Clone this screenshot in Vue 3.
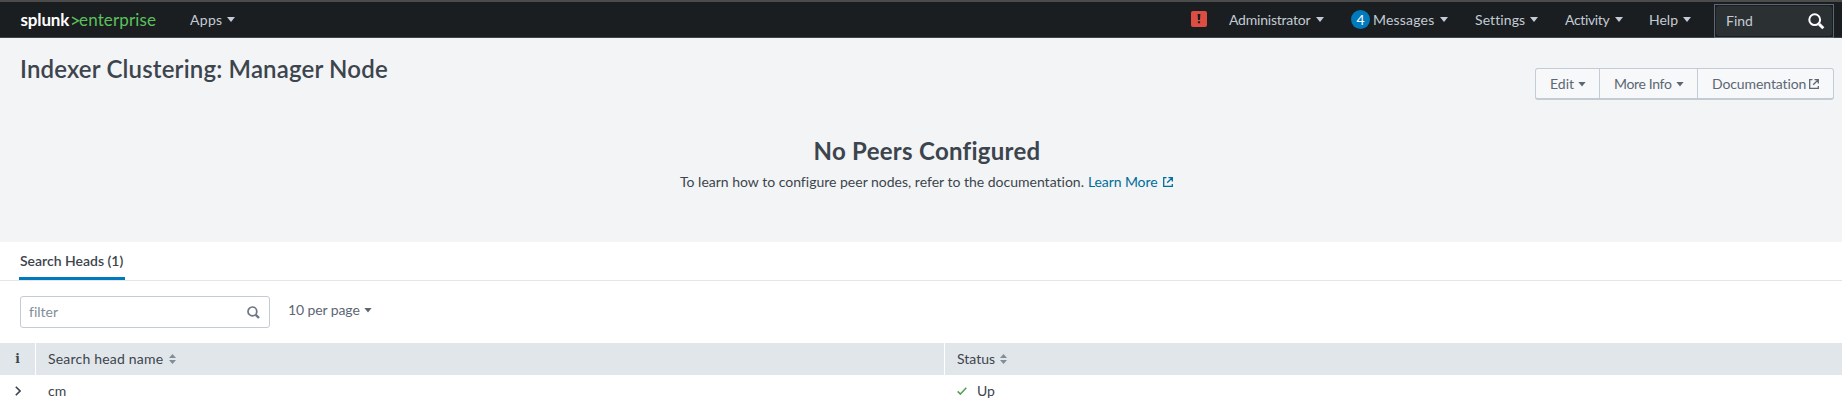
<script setup>
const menus = [
  { label: 'Administrator', cls: 'admin' },
  { label: 'Messages', cls: 'messages', count: 4 },
  { label: 'Settings', cls: 'settings' },
  { label: 'Activity', cls: 'activity' },
  { label: 'Help', cls: 'help' }
]
</script>

<template>
  <div class="page">
    <header class="bar">
      <div class="logo"><span class="brand">splunk</span><svg class="gt" width="9" height="10" viewBox="0 0 9 10"><path d="M1 1.2 7.4 4.8 1 8.4" /></svg><span class="edition">enterprise</span></div>
      <a class="menu apps"><span class="label">Apps</span><i class="caret"></i></a>
      <div class="alert"><svg width="16" height="16" viewBox="0 0 16 16"><path d="M6.6 3h2.8L9 9H7zM6.9 10.2h2.2v2H6.9z" /></svg></div>
      <a v-for="m in menus" :key="m.label" class="menu" :class="m.cls">
        <b v-if="m.count" class="count">{{ m.count }}</b>
        <span class="label">{{ m.label }}</span><i class="caret"></i>
      </a>
      <div class="find">
        <div class="find-in">
          <span>Find</span>
          <svg width="17" height="17" viewBox="0 0 17 17"><circle cx="6.7" cy="6.7" r="5.4" stroke-width="2" /><path d="m11 11 4.3 4.3" stroke-width="3" /></svg>
        </div>
      </div>
    </header>

    <section class="hero">
      <div class="head">
        <h1>Indexer Clustering: Manager Node</h1>
        <div class="buttons">
          <a class="edit"><span>Edit</span><i class="caret"></i></a>
          <a class="more"><span>More Info</span><i class="caret"></i></a>
          <a class="docs"><span>Documentation</span><svg class="ext" width="10" height="10" viewBox="0 0 10 10"><path d="M3.500.7H.7v8.600h8.600V7M5.500.7h3.800v3.800M9 1 4.200 5.800" /></svg></a>
        </div>
      </div>
      <h2>No Peers Configured</h2>
      <p><span class="msg">To learn how to configure peer nodes, refer to the documentation.</span><a class="learn">Learn More</a><svg class="ext blue" width="10" height="10" viewBox="0 0 10 10"><path d="M3.500.7H.7v8.600h8.600V7M5.500.7h3.800v3.800M9 1 4.200 5.800" /></svg></p>
    </section>

    <nav class="tabs"><a>Search Heads (1)</a></nav>

    <div class="tools">
      <div class="filter">
        <span>filter</span>
        <svg width="13" height="13" viewBox="0 0 13 13"><circle cx="5.4" cy="5.4" r="4.4" stroke-width="1.7" /><path d="m8.800 8.800 3.200 3.200" stroke-width="2.4" /></svg>
      </div>
      <a class="perpage"><span>10 per page</span><i class="caret"></i></a>
    </div>

    <div class="grid thead">
      <div class="info">i</div>
      <div class="cell"><span class="name">Search head name</span><svg class="sort" width="7" height="10" viewBox="0 0 7 10"><path d="M0 4 3.500 0 7 4zM0 6h7L3.500 10z" /></svg></div>
      <div class="cell"><span class="status">Status</span><svg class="sort" width="7" height="10" viewBox="0 0 7 10"><path d="M0 4 3.500 0 7 4zM0 6h7L3.500 10z" /></svg></div>
    </div>
    <div class="grid row">
      <div class="expand"><svg width="6" height="10" viewBox="0 0 6 10"><path d="M.8.8 5 5 .8 9.200" /></svg></div>
      <div class="cell"><span class="cm">cm</span></div>
      <div class="cell"><svg class="check" width="10" height="8" viewBox="0 0 10 8"><path d="m.7 4.400 2.700 2.700L9.300.8" /></svg><span class="up">Up</span></div>
    </div>
  </div>
</template>

<style>
body { margin: 0; background: #fff; overflow: hidden; }
</style>

<style scoped>
* { box-sizing: border-box; }
.page { width: 1842px; height: 404px; overflow: hidden; font: 14px/20px Lato, "Open Sans", sans-serif; font-variant-ligatures: none; color: #3c444d; white-space: nowrap; }
span, a { white-space: nowrap; }
svg { flex: none; fill: none; stroke: currentColor; }
.caret { flex: none; width: 8px; height: 5px; background: currentColor; clip-path: polygon(0 0, 100% 0, 50% 100%); }
.bar { display: flex; align-items: center; height: 38px; border-top: 2px solid #4c4c4c; border-bottom: 1px solid #3c444d; background: #1a1e21; color: #c3cbd4; }
.logo { display: flex; align-items: center; width: 169px; padding-left: 20.5px; font-size: 17px; }
.brand { width: 50.5px; color: #fff; font-weight: 700; letter-spacing: -0.15px; }
.gt { color: #5cc05c; stroke-width: 1.5; margin-top: 2px; margin-right: -1px; }
.edition { color: #5cc05c; letter-spacing: 0.15px; }
.menu { display: flex; align-items: center; }
.label { flex: none; }
.apps { margin-left: 21px; width: 1001px; }
.apps .label { width: 37px; letter-spacing: 0.3px; }
.alert { width: 16px; height: 16px; border-radius: 2px; background: #dc4e41; margin-top: -1px; }
.alert svg { display: block; fill: #1a1e21; stroke: none; }
.admin { margin-left: 22px; }
.admin .label { width: 87px; letter-spacing: -0.22px; }
.messages { margin-left: 27px; }
.messages .label { width: 67px; letter-spacing: 0.2px; }
.count { width: 19px; height: 19px; margin-right: 3px; border-radius: 50%; background: #007abd; color: #fff; font-weight: 400; line-height: 19px; text-align: center; }
.settings { margin-left: 27px; }
.settings .label { width: 55px; letter-spacing: 0.1px; }
.activity { margin-left: 27px; }
.activity .label { width: 50px; letter-spacing: -0.35px; }
.help { margin-left: 26px; }
.help .label { width: 34px; }
.find { margin-left: 23px; width: 120px; height: 34px; padding: 1px; border: 1px solid #5c6773; align-self: flex-end; margin-bottom: -1px; }
.find-in { display: flex; align-items: center; justify-content: space-between; height: 100%; padding: 0 7px 0 10px; border-radius: 3px; background: #2b3033; }
.find svg { color: #fff; }
.hero { height: 204px; background: #f2f4f5; }
.head { display: flex; justify-content: space-between; height: 97px; padding: 17px 8px 0 20px; }
h1 { margin: 0; font-size: 24px; line-height: 28px; font-weight: 600; letter-spacing: 0.17px; }
.buttons { display: flex; height: 32px; margin-top: 13px; border: 1px solid #c3cbd4; border-bottom-width: 2px; border-radius: 3px; background: #f7f8fa; color: #5c6773; }
.buttons a { display: flex; align-items: center; padding: 1px 0 0 14px; }
.buttons a + a { border-left: 1px solid #c3cbd4; }
.edit { width: 63px; }
.edit span { width: 28px; }
.more { width: 98px; }
.more span { width: 62px; letter-spacing: -0.35px; }
.docs { width: 136px; }
.docs span { width: 97px; letter-spacing: -0.1px; }
h2 { margin: 0; padding-left: 12px; text-align: center; font-size: 24px; line-height: 32px; font-weight: 700; letter-spacing: 0.28px; }
p { display: flex; align-items: center; margin: 5px 0 0 680px; }
.msg { width: 408px; }
.learn { width: 75px; color: #006d9c; letter-spacing: -0.1px; }
.blue { color: #006d9c; }
.ext { stroke-width: 1.3; }
.tabs { height: 39px; padding-left: 19px; border-bottom: 1px solid #e1e6eb; }
.tabs a { display: block; width: 106px; height: 38px; padding: 9px 0 0 1px; border-bottom: 3px solid #007abd; font-weight: 600; }
.tools { display: flex; height: 62px; padding: 15px 0 0 20px; color: #5c6773; }
.filter { display: flex; align-items: center; justify-content: space-between; width: 250px; height: 32px; padding: 0 9px 0 8px; border: 1px solid #c3cbd4; border-radius: 3px; color: #818d99; }
.filter svg { color: #6b7785; margin-top: 1px; }
.perpage { display: flex; align-items: center; height: 28px; margin-left: 18px; }
.perpage span { width: 76px; letter-spacing: -0.1px; }
.grid { display: grid; grid-template-columns: 35px 909px 1fr; height: 32px; }
.grid > div { display: flex; align-items: center; }
.thead { background: #e1e6eb; }
.thead .cell { border-left: 1px solid #fff; padding-left: 12px; }
.row .cell { padding-left: 13px; }
.info { justify-content: center; font: 700 12px/20px "DejaVu Serif", serif; }
.name { width: 121px; letter-spacing: 0.2px; }
.status { width: 43px; }
.sort { fill: #818d99; stroke: none; }
.expand { padding-left: 15px; }
.expand svg { stroke-width: 1.6; }
.check { color: #53a051; stroke-width: 1.5; margin-right: 10px; }
</style>
